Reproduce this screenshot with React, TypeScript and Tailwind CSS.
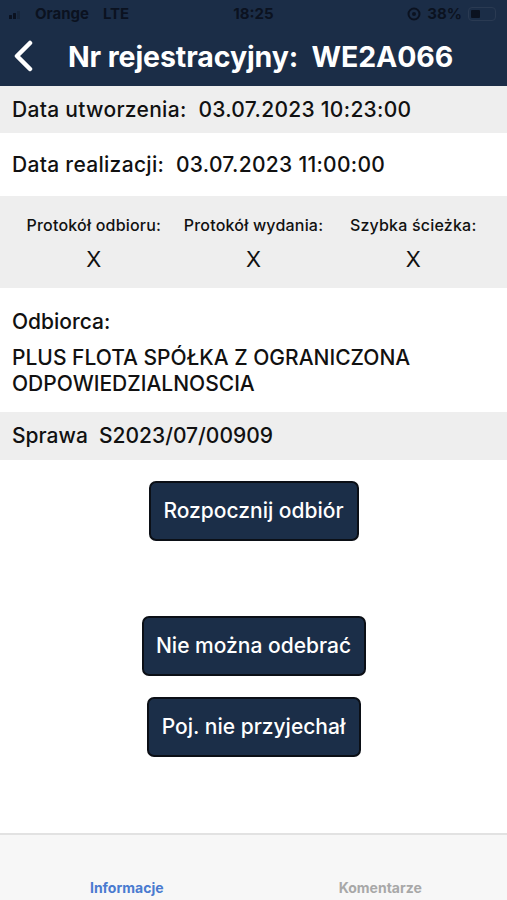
import React from 'react';

const font = { fontFamily: 'Inter, "Noto Sans", sans-serif' };

const ActionButton: React.FC<{ label: string; className?: string }> = ({ label, className = '' }) => (
  <button className={`h-[60px] rounded-[7px] border-2 border-[#0b0f16] bg-[#1b2e48] text-white text-[21px] font-medium ${className}`}>
    {label}
  </button>
);

const App: React.FC = () => {
  return (
    <div className="w-[507px] h-[900px] flex flex-col bg-white text-[#111] overflow-hidden" style={font}>
      {/* header */}
      <div className="bg-[#1b2d47] h-[86px] flex flex-col">
        <div className="h-[28px] grid grid-cols-3 items-center px-[9px] text-[#0b1220] text-[15px] font-bold">
          <div className="flex items-center gap-[6px]">
            <svg width="14" height="10" viewBox="0 0 14 10">
              <rect x="0" y="6" width="3" height="4" rx="0.5" fill="#0b1220" />
              <rect x="4" y="4" width="3" height="6" rx="0.5" fill="#0b1220" />
              <rect x="8" y="2" width="3" height="8" rx="0.5" fill="#17263b" />
            </svg>
            <span className="ml-[6px]">Orange</span>
            <span className="ml-[8px]">LTE</span>
          </div>
          <span className="text-center">18:25</span>
          <div className="flex items-center justify-end gap-[6px] pr-[2px]">
            <svg width="14" height="14" viewBox="0 0 14 14">
              <circle cx="7" cy="7" r="5.5" fill="none" stroke="#0b1220" strokeWidth="2" />
              <circle cx="7" cy="7" r="2" fill="#0b1220" />
            </svg>
            <span>38%</span>
            <div className="w-[28px] h-[14px] rounded-[4px] border border-[#2a3a52] p-[2px] flex">
              <div className="w-[9px] h-full bg-[#0b1220] rounded-[1px]" />
            </div>
          </div>
        </div>
        <div className="flex-1 flex items-center pl-[12px]">
          <svg width="22" height="32" viewBox="0 0 22 32" className="mb-[2px]">
            <path d="M18 3 L5 16 L18 29" fill="none" stroke="white" strokeWidth="4.5" strokeLinecap="round" strokeLinejoin="round" />
          </svg>
          <span className="ml-[34px] text-white text-[28.5px] font-bold tracking-[-0.1px] whitespace-pre">Nr rejestracyjny:  WE2A066</span>
        </div>
      </div>

      {/* info rows */}
      <div className="bg-[#eeeeee] h-[47px] flex items-center px-[12px] text-[21px] font-medium tracking-[0.3px] whitespace-pre">
        Data utworzenia:  03.07.2023 10:23:00
      </div>
      <div className="bg-white h-[63px] flex items-center px-[12px] text-[21px] font-medium tracking-[0.3px] whitespace-pre">
        Data realizacji:  03.07.2023 11:00:00
      </div>
      <div className="bg-[#eeeeee] h-[92px] grid grid-cols-3 pt-[17px] px-[14px]">
        {['Protokół odbioru:', 'Protokół wydania:', 'Szybka ścieżka:'].map((l) => (
          <div key={l} className="flex flex-col items-center">
            <span className="text-[16px] font-medium tracking-[0.2px] whitespace-nowrap">{l}</span>
            <span className="text-[22px] mt-[6px]">X</span>
          </div>
        ))}
      </div>
      <div className="bg-white h-[124px] px-[12px] pt-[18px]">
        <div className="text-[21px] font-medium">Odbiorca:</div>
        <div className="text-[21px] font-medium leading-[26px] mt-[7px]">
          PLUS FLOTA SPÓŁKA Z OGRANICZONA
          <br />
          ODPOWIEDZIALNOSCIA
        </div>
      </div>
      <div className="bg-[#eeeeee] h-[48px] flex items-center px-[12px] text-[21px] font-medium whitespace-pre">
        Sprawa  S2023/07/00909
      </div>

      {/* actions */}
      <div className="flex-1 flex flex-col items-center pt-[21px]">
        <ActionButton label="Rozpocznij odbiór" className="w-[210px]" />
        <ActionButton label="Nie można odebrać" className="w-[224px] mt-[75px]" />
        <ActionButton label="Poj. nie przyjechał" className="w-[214px] mt-[21px]" />
      </div>

      {/* tab bar */}
      <div className="h-[67px] bg-[#f7f7f7] border-t-2 border-[#e2e2e2] grid grid-cols-2 items-end pb-[2px] text-[14px] font-bold">
        <span className="text-center text-[#4a7bd0]">Informacje</span>
        <span className="text-center text-[#a8a8a8]">Komentarze</span>
      </div>
    </div>
  );
};

export default App;
